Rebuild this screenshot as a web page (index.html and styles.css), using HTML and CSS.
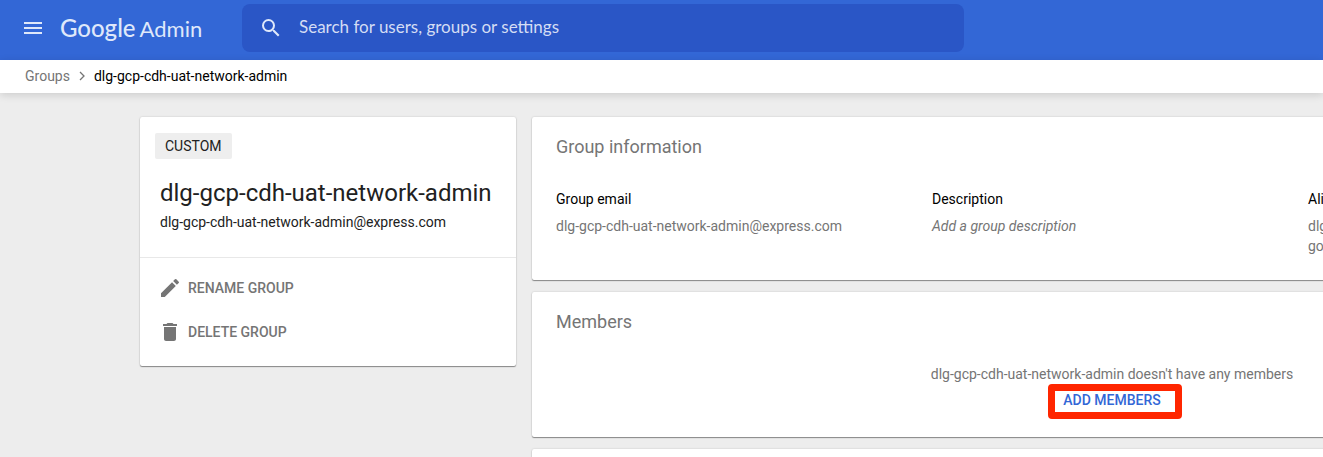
FILE: index.html
```html
<!DOCTYPE html>
<html lang="en">
<head>
<meta charset="utf-8">
<title>Google Admin – Groups</title>
<link rel="stylesheet" href="styles.css">
</head>
<body>
<header class="topbar">
  <button class="menu-button" type="button" aria-label="Main menu">
    <svg class="icon" viewBox="0 0 24 24"><path d="M3 18h18v-2H3v2zm0-5h18v-2H3v2zm0-7v2h18V6H3z"/></svg>
  </button>
  <a class="brand" href="#"><span class="brand-name">Google</span><span class="brand-product">Admin</span></a>
  <form class="search" role="search">
    <button class="search-button" type="button" aria-label="Search">
      <svg class="icon" viewBox="0 0 24 24"><path d="M15.5 14h-.79l-.28-.27A6.47 6.47 0 0 0 16 9.5 6.5 6.5 0 1 0 9.5 16c1.61 0 3.09-.59 4.23-1.57l.27.28v.79l5 4.99L20.49 19l-4.99-5zm-6 0C7.01 14 5 11.99 5 9.5S7.01 5 9.5 5 14 7.01 14 9.5 11.99 14 9.5 14z"/></svg>
    </button>
    <input class="search-input" type="search" aria-label="Search" placeholder="Search for users, groups or settings">
  </form>
</header>
<nav class="breadcrumb" aria-label="Breadcrumb">
  <a class="crumb" href="#">Groups</a>
  <svg class="crumb-arrow" viewBox="0 0 8 10"><path d="M2 1l4 4-4 4"/></svg>
  <span class="crumb-current">dlg-gcp-cdh-uat-network-admin</span>
</nav>
<main class="page">
  <aside class="card summary">
    <div class="summary-head">
      <span class="tag">CUSTOM</span>
      <h1 class="group-name">dlg-gcp-cdh-uat-network-admin</h1>
      <p class="group-address">dlg-gcp-cdh-uat-network-admin@express.com</p>
    </div>
    <div class="actions">
      <button class="action" type="button">
        <svg class="icon" viewBox="0 0 24 24"><path d="M3 17.25V21h3.75L17.81 9.94l-3.75-3.75L3 17.25zM20.71 7.04a1 1 0 0 0 0-1.41l-2.34-2.34a1 1 0 0 0-1.41 0l-1.83 1.83 3.75 3.75 1.83-1.83z"/></svg>
        RENAME GROUP
      </button>
      <button class="action" type="button">
        <svg class="icon" viewBox="0 0 24 24"><path d="M6 19c0 1.1.9 2 2 2h8c1.100 0 2-.9 2-2V7H6v12zM19 4h-3.500l-1-1h-5l-1 1H5v2h14V4z"/></svg>
        DELETE GROUP
      </button>
    </div>
  </aside>
  <div class="details">
    <section class="card panel">
      <h2 class="panel-title">Group information</h2>
      <dl class="facts">
        <div class="fact">
          <dt class="fact-label">Group email</dt>
          <dd class="fact-value">dlg-gcp-cdh-uat-network-admin@express.com</dd>
        </div>
        <div class="fact">
          <dt class="fact-label">Description</dt>
          <dd class="fact-value fact-empty">Add a group description</dd>
        </div>
        <div class="fact">
          <dt class="fact-label">Aliases</dt>
          <dd class="fact-value">dlg-gcp-cdh-uat-network-admin@express.com.test-google-a.com</dd>
        </div>
      </dl>
    </section>
    <section class="card panel">
      <h2 class="panel-title">Members</h2>
      <div class="members">
        <p class="members-note">dlg-gcp-cdh-uat-network-admin doesn't have any members</p>
        <button class="add-members" type="button">ADD MEMBERS</button>
      </div>
    </section>
    <section class="card panel"></section>
  </div>
</main>
</body>
</html>
```
FILE: styles.css
```css
* {
  box-sizing: border-box;
}

body {
  margin: 0;
  min-height: 100vh;
  overflow: hidden;
  background: #ededed;
  color: #212121;
  font: 14px/20px Roboto, sans-serif;
}

h1, h2, p, dl, dd {
  margin: 0;
  font-weight: 400;
}

button {
  padding: 0;
  border: 0;
  background: none;
  color: inherit;
  font: inherit;
}

a {
  color: inherit;
  text-decoration: none;
}

.icon {
  display: block;
  width: 24px;
  height: 24px;
  fill: currentColor;
}

.topbar {
  display: flex;
  align-items: center;
  height: 60px;
  padding: 0 21px 4px;
  background: #3367d6;
  color: #dfe8fa;
}

.brand {
  display: flex;
  align-items: baseline;
  gap: 4px;
  width: 181px;
  margin-right: 16px;
  padding-left: 15px;
  font: 24px/32px Lato, sans-serif;
}

.brand-name {
  font-weight: 500;
}

.brand-product {
  font-size: 22px;
}

.search {
  display: flex;
  align-items: center;
  flex: 0 1 722px;
  height: 48px;
  padding: 0 17px;
  gap: 16px;
  border-radius: 8px;
  background: #2a56c6;
}

.search-input {
  flex: 1;
  padding: 0 0 2px;
  border: 0;
  outline: 0;
  background: none;
  color: inherit;
  font: 17px/24px Lato, sans-serif;
}

.search-input::placeholder {
  color: #d4ddf4;
}

.breadcrumb {
  position: relative;
  display: flex;
  align-items: center;
  gap: 8px;
  height: 33px;
  padding: 0 25px 1px;
  background: #fff;
  box-shadow: 0 2px 8px rgba(0, 0, 0, .14);
}

.crumb {
  color: #757575;
}

.crumb-arrow {
  width: 8px;
  height: 10px;
  fill: none;
  stroke: #757575;
  stroke-width: 1.3;
}

.crumb-current {
  color: #000;
}

.page {
  display: flex;
  align-items: flex-start;
  gap: 16px;
  padding: 24px 24px 24px 140px;
}

.card {
  border-radius: 2px;
  background: #fff;
  box-shadow: 0 1px 1px rgba(0, 0, 0, .4), 0 0 2px rgba(0, 0, 0, .18);
}

.summary {
  flex: 0 0 376px;
}

.summary-head {
  padding: 16px 15px 25px;
  border-bottom: 1px solid #e8e8e8;
}

.tag {
  display: inline-block;
  padding: 3px 10px;
  border-radius: 2px;
  background: #eee;
}

.group-name {
  padding: 18px 5px 3px;
  font-size: 24px;
  line-height: 32px;
}

.group-address {
  padding: 0 5px;
}

.actions {
  display: flex;
  flex-direction: column;
  align-items: flex-start;
  gap: 20px;
  padding: 18px 18px 22px;
  color: #757575;
}

.action {
  display: flex;
  align-items: center;
  gap: 6px;
  font-weight: 500;
}

.details {
  display: flex;
  flex: 1 0 1160px;
  flex-direction: column;
  gap: 12px;
}

.panel {
  min-height: 145px;
  padding: 18px 24px 24px;
}

.panel-title {
  color: #757575;
  font-size: 18px;
  line-height: 24px;
}

.facts {
  display: grid;
  grid-template-columns: 1fr 1fr 1fr;
  gap: 16px;
  padding-top: 30px;
}

.fact-label {
  margin-bottom: 7px;
  color: #000;
}

.fact-value {
  color: #757575;
}

.fact-empty {
  font-style: italic;
}

.members {
  display: flex;
  flex-direction: column;
  align-items: center;
  gap: 3px;
  padding-top: 30px;
}

.members-note {
  color: #757575;
}

.add-members {
  position: relative;
  padding: 3px 0;
  color: #3367d6;
  font-weight: 500;
}

/* Highlight frame drawn over the button */
.add-members::after {
  content: "";
  position: absolute;
  inset: -3px -21px -6px -15px;
  border: 7px solid #ff2600;
  border-radius: 4px;
}
```
